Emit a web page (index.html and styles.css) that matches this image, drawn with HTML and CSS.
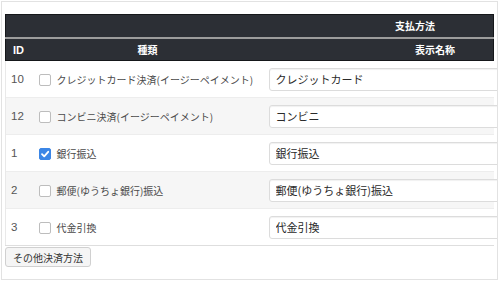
FILE: index.html
```html
<!DOCTYPE html>
<html lang="ja">
<head>
<meta charset="utf-8">
<link rel="stylesheet" href="styles.css">
</head>
<body>
<div class="frame">
  <table class="pay">
    <colgroup><col class="c-id"><col class="c-kind"><col class="c-name"></colgroup>
    <thead>
      <tr class="h1"><th colspan="3" class="h-pay">支払方法</th></tr>
      <tr class="h2"><th class="h-id">ID</th><th class="h-kind">種類</th><th class="h-name">表示名称</th></tr>
    </thead>
    <tbody>
      <tr><td class="id">10</td><td class="kind"><span class="cb"></span>クレジットカード決済(イージーペイメント)</td><td class="name"><input class="inp" value="クレジットカード"></td></tr>
      <tr class="alt"><td class="id">12</td><td class="kind"><span class="cb"></span>コンビニ決済(イージーペイメント)</td><td class="name"><input class="inp" value="コンビニ"></td></tr>
      <tr><td class="id">1</td><td class="kind"><span class="cb on"><svg viewBox="0 0 12 12" width="12" height="12"><path d="M3 6.2 L5.2 8.4 L9.2 3.8" fill="none" stroke="#fff" stroke-width="1.8" stroke-linecap="round" stroke-linejoin="round"/></svg></span>銀行振込</td><td class="name"><input class="inp" value="銀行振込"></td></tr>
      <tr class="alt"><td class="id">2</td><td class="kind"><span class="cb"></span>郵便(ゆうちょ銀行)振込</td><td class="name"><input class="inp" value="郵便(ゆうちょ銀行)振込"></td></tr>
      <tr><td class="id">3</td><td class="kind"><span class="cb"></span>代金引換</td><td class="name"><input class="inp" value="代金引換"></td></tr>
    </tbody>
  </table>
  <button class="btn">その他決済方法</button>
</div>
</body>
</html>
```
FILE: styles.css
```css
html, body { margin: 0; padding: 0; background: #fff; }
body { font-family: "Liberation Sans", "Noto Sans CJK JP", sans-serif; color: #333; }
.frame {
  margin: 1px;
  width: 497px;
  height: 279px;
  box-sizing: border-box;
  border: 1px solid #e2e2e2;
  padding: 12px 3px 0 3px;
  overflow: hidden;
}
.pay {
  width: 489px;
  table-layout: fixed;
  border-collapse: collapse;
}
.c-id { width: 27px; }
.c-kind { width: 230px; }
.pay th {
  background: #2c2f35;
  color: #fff;
  font-family: "Noto Sans CJK JP", sans-serif;
  font-size: 10px;
  font-weight: bold;
  padding: 0;
  line-height: 14px;
}
.h1 th { height: 22px; border: 1px solid #15171a; border-bottom: 2px solid #9c9c9c; text-align: right; padding-right: 58px; }
.h2 th { height: 21px; border-top: 2px solid #9c9c9c; border-bottom: 1px solid #15171a; }
.h2 th:first-child { border-left: 1px solid #15171a; }
.h2 th:last-child { border-right: 1px solid #15171a; }
.h-id { text-align: left; padding-left: 7px !important; font-family: "Liberation Sans", sans-serif !important; font-size: 11px !important; }
.h-kind { text-align: center; }
.h-name { text-align: right; padding-right: 38px !important; }
.pay td {
  height: 36px;
  padding: 0;
  border-top: 1px solid #ededed;
  font-size: 10px;
  vertical-align: middle;
}
.pay tbody tr:last-child td { border-bottom: 1px solid #dedede; }
.pay tbody td.id { border-left: 1px solid #e9e9e9; }
.alt td { background: #f6f6f6; }
.id { padding-left: 5px !important; font-size: 11.5px !important; color: #555; }
.kind { padding-left: 6px !important; white-space: nowrap; font-family: "Noto Sans CJK JP", sans-serif; color: #4a4a4a; }
.cb {
  display: inline-block;
  width: 10px;
  height: 10px;
  border: 1px solid #bdbdbd;
  border-radius: 2px;
  background: #fff;
  vertical-align: -2px;
  margin-right: 6px;
  position: relative;
}
.cb.on { background: #3b86e6; border-color: #3b86e6; }
.cb.on svg { position: absolute; left: -1px; top: -1px; }
.name { padding-left: 6px !important; }
.inp {
  display: block;
  width: 240px;
  height: 23px;
  box-sizing: border-box;
  border: 1px solid #dcdcdc;
  border-radius: 3px;
  box-shadow: inset 0 1px 1px rgba(0,0,0,0.06);
  padding: 0 6px;
  font-family: "Noto Sans CJK JP", sans-serif;
  font-size: 11px;
  color: #2a2a2a;
  background: #fff;
}
.btn {
  display: block;
  margin-top: 1px;
  width: 86px;
  height: 20px;
  padding: 0;
  background: #f5f5f5;
  border: 1px solid #d0d0d0;
  border-radius: 3px;
  font-family: "Noto Sans CJK JP", sans-serif;
  font-size: 10px;
  color: #333;
}
```
